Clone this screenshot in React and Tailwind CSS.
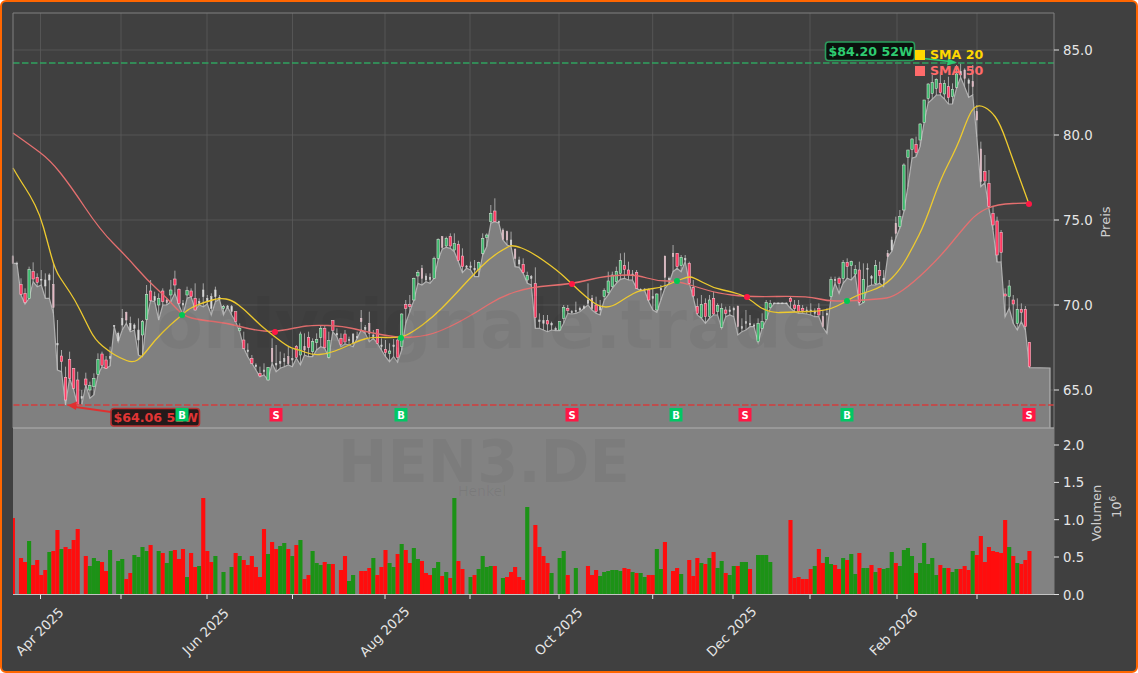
// Kurschart HEN3.DE: candles, SMA lines, volume panel. Pixel values were read off the chart.
const CANDLE_SECTIONS = [
  // y0 = top of the section, values are (px - y0) * 3
  { y0: 230, rows: "75 80 100 100 p,95 100 102 100 w,145 163 193 195 r,175 190 217 222 r,110 118 205 205 g,97 125 147 155 r,130 142 157 170 r,120 148 150 165 w,130 150 168 205 w,130 135 150 205 w,100 163 232 250 p,270 340 345 420 w,360 378 395 425 r,410 442 510 525 r,365 388 445 445 r,415 415 475 480 r,425 450 525 527 r,480 500 505 525 w,428 447 465 465 r,455 467 480 505 g,430 445 470 495 g,370 388 433 435 g,365 372 406 410 r,378 390 415 415 r,350 380 385 408 w,285 287 289 290 w,305 310 332 335 w,237 265 285 300 w,245 248 270 280 p,260 280 300 305 w,280 285 295 300 w,265 300 330 375 w,270 275 315 380 g,165 193 268 268 g,150 183 212 212 r,185 200 212 215 w,190 205 225 270 g,175 183 215 225 r,205 210 218 225 p,150 180 195 215 g,122 147 165 190 r,175 178 220 225 r,210 220 225 255 w,170 182 195 205 g,175 183 200 200 r,160 205 240 240 r,205 215 220 225 w,160 180 200 230 w,195 205 215 222 w,190 200 235 255 w,170 180 200 215 w,195 203 207 208 w,225 230 235 255 g,225 228 232 230 w,225 230 245 255 w,245 245 275 275 r,280 295 302 305 g,305 330 355 355 r,340 360 365 380 w,375 385 400 400 r,400 405 410 420 w,410 430 438 440 r,400 420 425 435 w,412 412 450 450 g,325 355 395 400 p,345 400 405 425 w,365 395 400 415 w,370 385 395 410 w,350 380 400 405 p,355 385 390 410 w,345 350 382 385 r,305 312 375 405 g" },
  { y0: 190, rows: "430 470 480 495 p,425 442 472 500 r,445 455 485 500 g,430 448 458 480 g,405 415 442 470 g,405 415 473 475 r,425 452 502 503 g,390 392 421 425 r,415 430 435 440 w,430 446 463 470 r,420 432 456 462 r,440 448 452 465 w,430 432 460 470 w,425 440 444 445 w,360 385 395 420 p,405 412 418 430 w,365 400 430 455 p,420 435 440 445 w,418 418 460 460 r,445 465 470 480 w,450 478 488 500 r,460 483 490 515 g,447 465 470 500 w,445 450 502 517 r,370 372 470 480 g,330 344 355 400 r,315 344 350 365 r,263 265 330 332 g,240 247 258 280 g,225 235 265 285 p,250 258 270 275 w,250 262 268 280 w,200 205 265 265 g,145 148 205 210 g,140 140 172 178 p,140 145 168 172 g,130 140 168 175 r,130 160 180 185 g,152 163 212 215 r,175 198 230 248 r,225 228 232 235 w,215 228 232 240 w,210 235 240 260 w,215 218 238 260 g,130 145 190 195 g,130 135 142 170 g,45 70 95 100 g,25 63 95 95 r,92 95 97 100 w,115 120 148 150 p,122 125 150 165 p,125 150 165 170 w,175 178 205 230 p,200 210 222 232 w,205 223 247 250 r,245 257 270 280 g,255 260 265 285 w,232 281 383 415 r,370 390 395 415 w,375 392 400 420 w,375 392 402 425 r,395 400 405 420 w,410 415 420 422 w,395 395 420 422 g,345 352 385 400 g,345 355 362 370 r,360 365 368 372 w,335 362 365 370 w,350 355 360 365 w,345 350 355 355 w,280 330 340 345 w,315 325 355 360 p,320 345 365 370 r,330 350 360 375 w" },
  { y0: 220, rows: "205 212 230 240 g,155 183 218 225 g,155 165 200 205 g,140 155 185 190 g,100 122 160 178 g,98 137 148 175 r,125 150 165 180 r,150 162 165 180 w,150 157 205 205 r,205 208 212 212 w,205 207 210 212 w,205 210 240 245 r,205 230 235 270 w,220 222 270 277 g,195 205 210 240 w,108 108 172 205 p,170 175 180 190 w,75 100 110 155 p,100 100 140 145 r,105 112 137 155 g,105 115 120 125 w,125 130 190 190 r,180 203 228 232 r,235 260 280 285 r,225 253 293 295 g,235 250 290 310 r,225 240 290 295 g,215 235 282 285 r,250 256 275 285 g,250 265 322 325 g,260 270 280 290 r,258 270 275 285 w,260 265 270 290 w,258 258 320 345 p,295 320 325 335 w,270 305 310 330 w,285 310 315 320 w,310 315 318 320 w,295 310 365 368 g,280 305 325 325 g,240 247 298 300 g,240 250 263 265 g,248 249 251 250 w,248 249 251 250 w,248 249 251 250 w,248 249 251 250 w,230 235 245 265 r,240 255 265 275 r,240 256 275 280 r,255 265 272 280 r,260 270 274 282 w,250 270 275 285 w,265 275 280 290 w,250 265 285 290 r,270 290 320 322 p,265 280 285 340 w,170 178 230 232 g,170 178 182 190 w,170 176 190 220 r,120 127 175 190 g,115 127 140 175 r,122 124 137 180 g,135 148 162 165 g,125 150 247 255 r,130 178 247 248 g,130 145 148 200 w,165 170 175 195 w,120 137 190 195 g,125 152 167 190 r,150 175 180 200 w,90 100 110 110 p,50 60 90 95 w,-10 10 40 55 p" },
  { y0: 0, rows: "630 650 680 685 g,490 495 630 635 g,450 450 472 560 g,415 417 448 475 g,410 433 458 470 r,370 372 420 440 g,300 300 368 368 g,250 252 295 308 g,225 248 280 298 g,235 238 265 285 g,215 250 278 285 r,240 250 282 297 g,230 260 293 312 r,250 268 290 312 g,195 222 262 265 g,190 215 225 232 w,205 210 235 260 p,235 240 250 292 w,195 245 260 285 p,315 335 360 410 p,425 447 545 560 p,465 515 543 548 r,510 550 620 625 r,620 640 675 690 r,650 663 765 786 r,690 697 757 786 r" },
  { y0: 220, rows: "205 222 228 290 r,180 198 230 265 g,225 240 252 310 r,235 268 310 330 g,250 268 277 305 r,258 268 320 330 r,366 367 440 443 r" },
];

const candles = CANDLE_SECTIONS.flatMap(({ y0, rows }) =>
  rows.split(",").map((row) => {
    const [hi, top, bot, lo, kind] = row.split(" ");
    const py = (v) => y0 + Number(v) / 3;
    return { hi: py(hi), top: py(top), bot: py(bot), lo: py(lo), kind };
  })
);

const VOLUME =
  "r518 - r558 r562 g541 r565 r560 r575 r570 g552 r551 r530 g549 r547 r549 r540 r529 - r556 g566 g558 g561 r562 r571 g550 - g561 g559 r579 r573 g555 g557 g547 g551 r545 - g551 r553 g563 g551 r550 r559 r549 g577 r553 r567 g566 r498 r551 r562 g556 - g572 - g567 r553 g556 r560 r565 r556 r567 r577 r529 g554 r542 r549 g546 g543 r549 g556 r545 g540 r579 r575 g551 g563 g565 r562 g564 r564 - r570 r556 g581 g575 - r571 r571 r568 g558 r575 r567 r550 g563 g567 r554 g544 r550 r563 g548 g559 r561 r573 r575 g568 g562 r576 g572 r578 g498 r561 r569 - g577 r575 g569 g556 g567 g566 r566 - g578 r577 r572 r567 r577 r580 g507 - r525 r547 r556 r563 g573 - g558 g551 r575 - g568 - - r566 r575 r570 g576 g572 g571 g570 g570 g571 r568 r569 g572 r573 g573 g577 r575 r575 g549 g569 r542 - r571 r568 g574 - r560 r576 r558 g563 r564 g558 r552 g568 g561 r573 g575 g566 r566 g562 g562 r569 - g555 g555 g555 g562 - - - - r520 r578 r577 r579 r579 r569 g566 r549 r563 g557 g564 r565 r569 g558 r560 g554 g574 r553 g568 g568 r565 g572 r568 g569 g568 g552 r563 g566 g550 g548 g556 r573 g563 g543 g564 g558 g575 r565 g568 r568 g572 g569 r569 r566 r570 g551 r555 r536 r562 r547 r551 r552 r553 r520 g547 r556 g563 r564 r560 r551".split(
    " "
  );

const SMA20 = [[13,168],[20,180],[30,195],[40,215],[47,240],[55,270],[65,285],[75,300],[85,320],[95,340],[110,352],[120,358],[133,363],[142,357],[155,340],[170,325],[182,315],[190,308],[205,302],[220,298],[232,300],[245,310],[260,325],[275,337],[290,348],[300,350],[312,355],[327,354],[343,348],[360,340],[373,337],[400,338],[413,332],[433,317],[450,300],[473,275],[490,258],[507,247],[513,245],[530,251],[557,270],[572,284],[587,298],[600,307],[612,307],[627,297],[640,290],[660,288],[677,281],[687,277],[693,277],[713,288],[733,292],[747,297],[767,313],[793,312],[827,311],[847,301],[857,295],[883,287],[900,270],[913,247],[925,223],[940,180],[957,147],[967,120],[973,108],[980,105],[990,110],[1000,123],[1013,160],[1029,204]];
const SMA50 = [[13,133],[30,145],[50,160],[70,185],[100,230],[127,257],[147,280],[167,298],[183,316],[200,320],[227,323],[253,330],[275,332],[300,327],[313,325],[343,326],[367,332],[400,338],[427,336],[450,327],[477,312],[500,297],[530,287],[572,284],[600,277],[620,275],[637,275],[657,281],[677,281],[700,288],[717,293],[747,297],[807,296],[827,301],[847,301],[880,299],[893,297],[913,283],[940,257],[962,230],[977,213],[997,204],[1029,203]];

const GRID_X = [40.5, 121, 207, 292.5, 385, 470, 559, 652.7, 733, 810, 897, 977];
const PRICE_TICKS = [["85.0", 50], ["80.0", 135], ["75.0", 220], ["70.0", 305], ["65.0", 390]];
const VOL_TICKS = [["2.0", 445], ["1.5", 482.4], ["1.0", 519.7], ["0.5", 557], ["0.0", 594.5]];
const DATE_LABELS = [["Apr 2025", 40], ["Jun 2025", 206], ["Aug 2025", 385], ["Oct 2025", 559], ["Dec 2025", 732], ["Feb 2026", 894]];
const SIGNALS = [["B", 182, 315, 182], ["S", 275, 332, 276], ["B", 401, 338, 401], ["S", 572, 284, 572], ["B", 677, 281, 676], ["S", 747, 297, 745], ["B", 847, 301, 847], ["S", 1029, 204, 1029]];

const cx = (i) => 12.9 + 4.05 * i;

// Smooth line through midpoints so the traced points don't show corners
const smooth = (pts) => {
  let d = `M${pts[0][0]} ${pts[0][1]}`;
  for (let i = 1; i < pts.length - 1; i++) {
    const mx = (pts[i][0] + pts[i + 1][0]) / 2;
    const my = (pts[i][1] + pts[i + 1][1]) / 2;
    d += ` Q${pts[i][0]} ${pts[i][1]} ${mx} ${my}`;
  }
  const last = pts[pts.length - 1];
  return `${d} L${last[0]} ${last[1]}`;
};

const lowLine = candles.map((c, i) => `${cx(i).toFixed(1)} ${c.lo.toFixed(1)}`).join(" L");
const areaTop = `M13 ${candles[0].lo.toFixed(1)} L${lowLine} L1050 368 L1050 428`;

const BODY = {
  g: { fill: "#3cb96c", stroke: "#d5e6d8" },
  r: { fill: "#ff3a62", stroke: "#f7c4d0" },
  p: { fill: "#e6b4c0", stroke: "#e0c8ce" },
  w: { fill: "#dcdcdc", stroke: "#cfcfcf" },
};

const Candle = ({ c, i }) => {
  const x = cx(i);
  const style = BODY[c.kind];
  const slim = c.kind === "w" || c.kind === "p";
  return (
    <g>
      <line x1={x} x2={x} y1={c.hi} y2={c.lo} stroke="#bfbfbf" strokeWidth="0.8" />
      <rect
        x={x - (slim ? 0.7 : 1.2)}
        y={c.top}
        width={slim ? 1.4 : 2.4}
        height={Math.max(c.bot - c.top, 0.8)}
        fill={style.fill}
        stroke={style.stroke}
        strokeWidth="0.55"
      />
    </g>
  );
};

export default function App() {
  return (
    <div className="h-[673px] w-[1138px] overflow-hidden rounded-md border-2 border-[#ff6600] bg-[#404040] font-['DejaVu_Sans']">
      <svg width="1134" height="669" viewBox="2 2 1134 669" className="block">
        {/* price panel grid */}
        {GRID_X.map((x) => (
          <line key={x} x1={x} x2={x} y1="13" y2="428" stroke="#5a5a5a" strokeWidth="0.8" />
        ))}
        {PRICE_TICKS.map(([, y]) => (
          <line key={y} x1="13" x2="1054" y1={y} y2={y} stroke="#5a5a5a" strokeWidth="0.8" />
        ))}

        <path d={`${areaTop} L13 428 Z`} fill="#808080" />
        <path d={areaTop} fill="none" stroke="#b0b0b0" strokeWidth="1.2" />

        {candles.map((c, i) => (
          <Candle key={i} c={c} i={i} />
        ))}

        <path d={smooth(SMA50)} fill="none" stroke="#e46f6f" strokeWidth="1.3" />
        <path d={smooth(SMA20)} fill="none" stroke="#eeca2e" strokeWidth="1.3" />

        {/* 52 week lines */}
        <line x1="13" x2="1054" y1="63" y2="63" stroke="#2fa35f" strokeWidth="1.7" strokeDasharray="6.5 2.5" />
        <line x1="13" x2="1054" y1="405" y2="405" stroke="#d23c3c" strokeWidth="1.7" strokeDasharray="6.5 2.5" />

        {/* volume panel */}
        <rect x="13" y="428" width="1041" height="166.5" fill="#828282" />
        {VOLUME.map((v, i) => {
          if (v === "-") return null;
          const top = Number(v.slice(1));
          const x0 = Math.max(10.85 + 4.05 * i, 13);
          const x1 = 10.85 + 4.05 * i + 4.1;
          return (
            <rect key={i} x={x0} y={top} width={x1 - x0} height={594 - top} fill={v[0] === "r" ? "#ff0d0d" : "#1c9216"} />
          );
        })}

        {/* watermarks */}
        <text x="492" y="348" textAnchor="middle" fontSize="68" fontWeight="700" fill="#000" fillOpacity="0.045">
          onlysignale.trade
        </text>
        <text x="484" y="482" textAnchor="middle" fontSize="59" fontWeight="700" fill="#000" fillOpacity="0.045">
          HEN3.DE
        </text>
        <text x="482" y="496" textAnchor="middle" fontSize="14" fill="#000" fillOpacity="0.06">
          Henkel
        </text>

        {/* signal dots */}
        {SIGNALS.map(([kind, x, y]) => (
          <circle key={x} cx={x} cy={y} r="3" fill={kind === "B" ? "#00c853" : "#ff1744"} />
        ))}

        {/* low annotation */}
        <line x1="111" y1="412" x2="72" y2="406.5" stroke="#e03030" strokeWidth="1.8" />
        <polygon points="67.5,405.3 77,401.5 76,410" fill="#e03030" />
        <rect x="111" y="408.5" width="88.5" height="17.5" rx="3" fill="#241a1a" stroke="#b83030" strokeWidth="1.6" />
        <text x="113.5" y="422" fontSize="12.6" fontWeight="700" fill="#e03535">
          $64.06 52W
        </text>

        {/* signal badges */}
        {SIGNALS.map(([kind, , , bx]) => (
          <g key={bx}>
            <rect x={bx - 6.5} y="408" width="13" height="13.5" fill={kind === "B" ? "#00c864" : "#ff1744"} />
            <text x={bx} y="418.5" textAnchor="middle" fontSize="10" fontWeight="700" fill="#fff">
              {kind}
            </text>
          </g>
        ))}

        {/* high annotation */}
        <line x1="915" y1="57.5" x2="950" y2="61.5" stroke="#2ecc71" strokeWidth="1.6" />
        <polygon points="957,62.5 947,65.5 948,58.5" fill="#2ecc71" />
        <rect x="825.5" y="42" width="89" height="18.5" rx="3" fill="#0b120e" stroke="#2a9d5c" strokeWidth="1.6" />
        <text x="828.5" y="55.5" fontSize="12.6" fontWeight="700" fill="#2ecc71">
          $84.20 52W
        </text>

        {/* legend */}
        <rect x="915" y="50" width="10" height="10" fill="#ffd700" />
        <text x="930" y="58.5" fontSize="12.6" fontWeight="700" fill="#ffd700">
          SMA 20
        </text>
        <rect x="915" y="66" width="10" height="10" fill="#ff6b6b" />
        <text x="930" y="74.5" fontSize="12.6" fontWeight="700" fill="#ff6b6b">
          SMA 50
        </text>

        {/* frame */}
        <path d="M13 428 V13 H1054 V594.5" fill="none" stroke="#808080" strokeWidth="1" />
        <line x1="13" x2="1054" y1="428" y2="428" stroke="#a0a0a0" strokeWidth="1.6" />
        <line x1="13" x2="1054" y1="594.5" y2="594.5" stroke="#c4c4c4" strokeWidth="1" />

        {/* axes */}
        {[...PRICE_TICKS, ...VOL_TICKS].map(([label, y]) => (
          <g key={y}>
            <line x1="1054" x2="1059" y1={y} y2={y} stroke="#e0e0e0" strokeWidth="1" />
            <text x="1063" y={y + 5} fontSize="13.3" fill="#e6e6e6">
              {label}
            </text>
          </g>
        ))}
        {GRID_X.map((x) => (
          <line key={x} x1={x} x2={x} y1="594.5" y2="599" stroke="#e6e6e6" strokeWidth="1" />
        ))}
        {DATE_LABELS.map(([label, x]) => (
          <text key={label} x={x} y="636" textAnchor="middle" fontSize="13.3" fill="#e6e6e6" transform={`rotate(-45 ${x} 632)`}>
            {label}
          </text>
        ))}
        <text transform="translate(1110 222) rotate(-90)" textAnchor="middle" fontSize="13" fill="#cfcfcf">
          Preis
        </text>
        <text transform="translate(1101 513) rotate(-90)" textAnchor="middle" fontSize="13" fill="#cfcfcf">
          Volumen
        </text>
        <text transform="translate(1121 518) rotate(-90)" fontSize="13" fill="#cfcfcf">
          10
          <tspan dy="-5" fontSize="9">
            6
          </tspan>
        </text>
      </svg>
    </div>
  );
}
